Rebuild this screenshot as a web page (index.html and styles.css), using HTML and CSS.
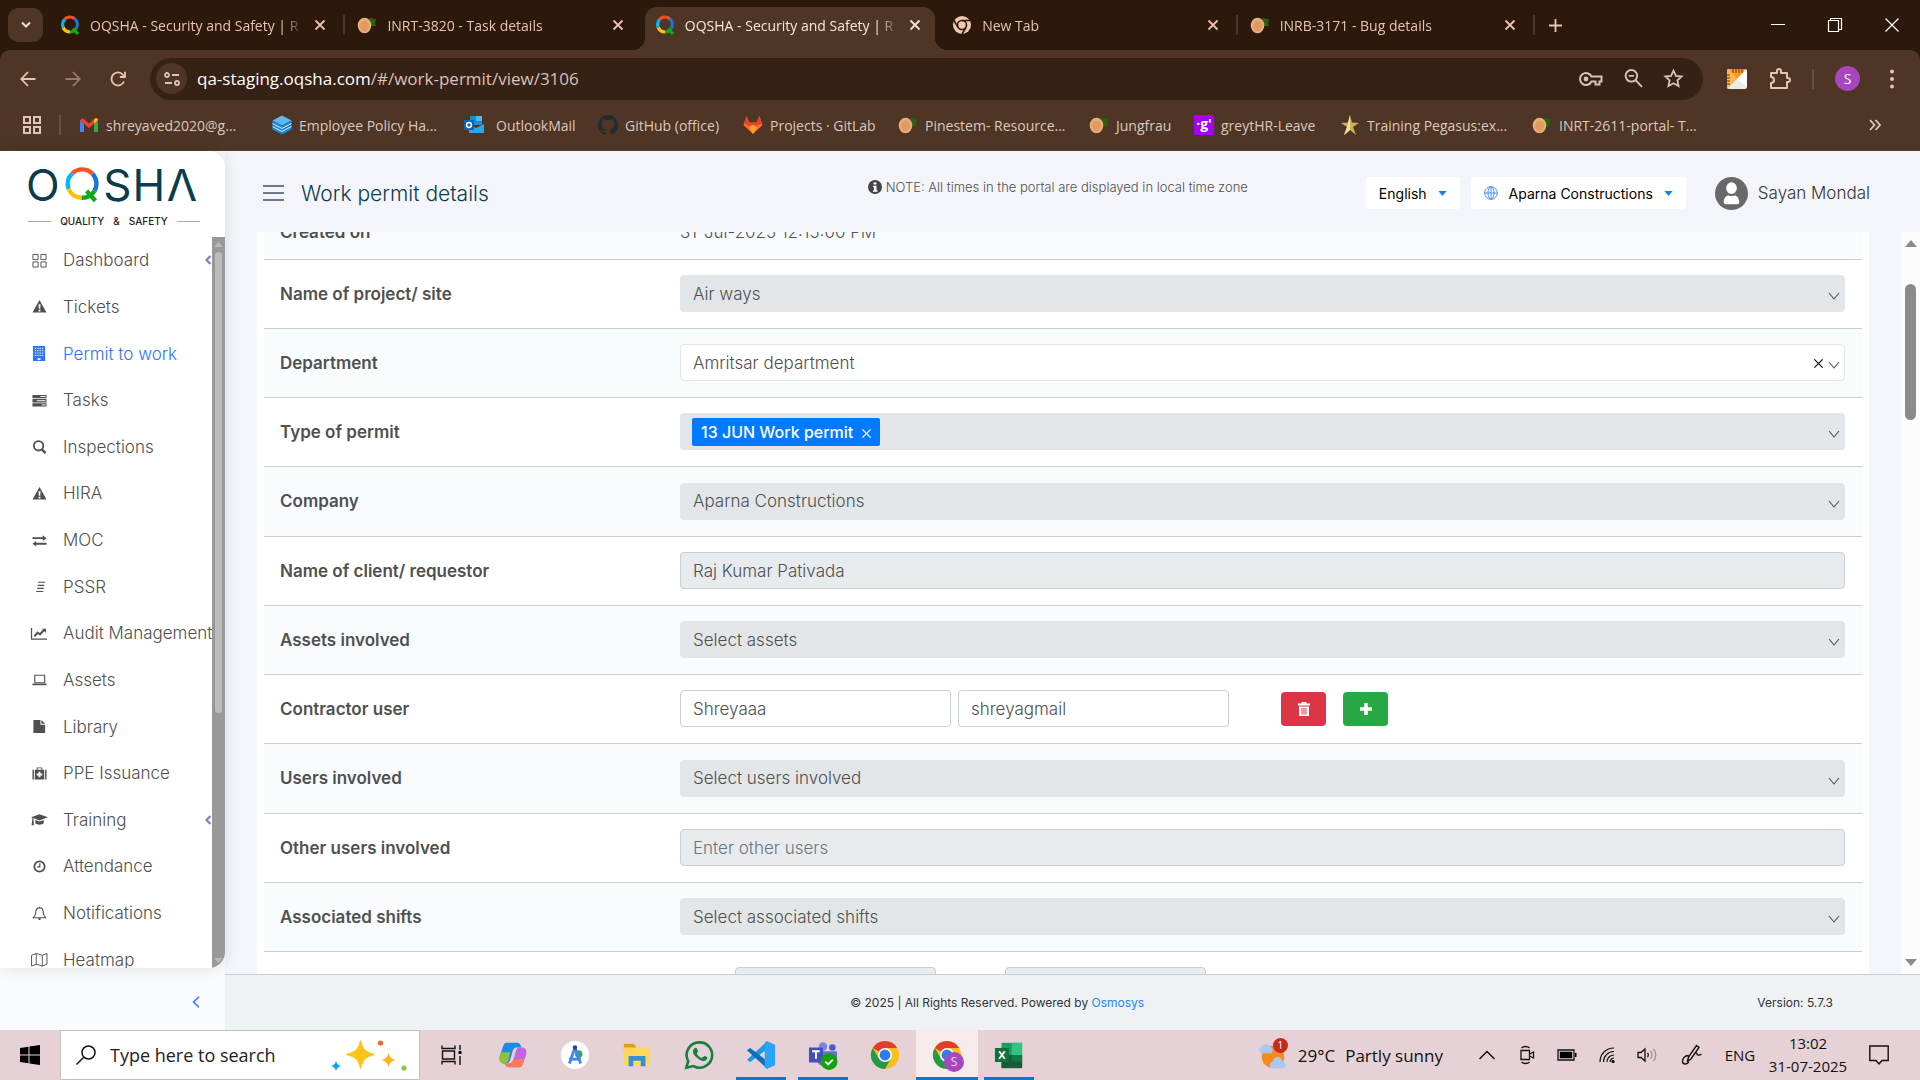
FILE: index.html
```html
<!DOCTYPE html>
<html lang="en">
<head>
  <meta charset="UTF-8" />
  <meta name="viewport" content="width=device-width, initial-scale=1.0"/>
  <title>OQSHA - Security and Safety</title>
  <link rel="stylesheet" href="styles.css">
</head>
<body>
  <!-- shared icons -->
  <svg class="sprite" aria-hidden="true">
    <symbol id="q" viewBox="0 0 20 20">
      <g fill="none" stroke-width="3.2">
        <path d="M4.5 4.5A7.6 7.6 0 0 1 14.5 3.6" stroke="#ff4e1f"/>
        <path d="M14.5 3.6A7.8 7.8 0 0 1 16.3 13.5" stroke="#1976d2"/>
        <path d="M4.5 4.5A7.8 7.8 0 0 0 3.2 12.5" stroke="#00b8f5"/>
        <path d="M3.2 12.5A7.6 7.6 0 0 0 10 17" stroke="#ffc107"/>
        <path d="M10 17A7.4 7.4 0 0 0 16.3 13.5M13 13.5L18 19" stroke="#12a81c"/>
      </g>
    </symbol>
    <symbol id="mango" viewBox="0 0 20 20">
      <path d="M12 3l7 1-1 4 1 3h-5l-2-3z" fill="#2e5f10"/>
      <ellipse cx="7.5" cy="10.5" rx="6.8" ry="7.8" fill="#e3b07a"/>
      <ellipse cx="7.5" cy="11" rx="4.5" ry="5.4" fill="#e39a62"/>
    </symbol>
    <symbol id="close" viewBox="0 0 12 12"><path d="M1.5 1.5l9 9M10.5 1.5l-9 9" stroke="currentColor" stroke-width="1.8" fill="none"/></symbol>
    <symbol id="thin-x" viewBox="0 0 12 12"><path d="M1.5 1.5l9 9M10.5 1.5l-9 9" stroke="currentColor" stroke-width="1.4" fill="none"/></symbol>
    <symbol id="down" viewBox="0 0 12 8"><path d="M1 1l5 6 5-6" stroke="currentColor" stroke-width="1.1" fill="none"/></symbol>
    <symbol id="caret" viewBox="0 0 10 6"><path d="M0 0h10L5 6z" fill="currentColor"/></symbol>
    <symbol id="warn" viewBox="0 0 16 16"><path fill="currentColor" fill-rule="evenodd" d="M8 1l7.5 13.5H.5zM6.9 5.5l.3 5h1.6l.3-5zM7 11.5v1.8h2v-1.8z"/></symbol>
    <symbol id="left" viewBox="0 0 8 10"><path d="M6.5 1L2.5 5l4 4" stroke="currentColor" stroke-width="2.2" fill="none"/></symbol>
    <symbol id="chrome" viewBox="0 0 32 32">
      <circle cx="16" cy="16" r="15" fill="#fbc116"/>
      <path d="M16 16L3 8.5A15 15 0 0 1 29 8.5H16z" fill="#e33b2e"/>
      <path d="M3 8.5A15 15 0 0 0 16 31l6.500-11.500L9.500 19.700z" fill="#249a46"/>
      <circle cx="16" cy="16" r="7.5" fill="#fff"/>
      <circle cx="16" cy="16" r="5.8" fill="#2f7de9"/>
    </symbol>
  </svg>

  <header class="browser">
    <div class="tabstrip">
      <button class="tab-search" aria-label="Search tabs"><svg viewBox="0 0 12 8"><path d="M2 1.5l4 4 4-4" fill="none" stroke="currentColor" stroke-width="2"/></svg></button>
      <div class="tabs">
        <div class="tab divided">
          <svg class="fav"><use href="#q"/></svg><span class="tab-title">OQSHA - Security and Safety | R</span>
          <button class="tab-close" aria-label="Close tab"><svg><use href="#close"/></svg></button>
        </div>
        <div class="tab">
          <svg class="fav"><use href="#mango"/></svg><span class="tab-title">INRT-3820 - Task details</span>
          <button class="tab-close" aria-label="Close tab"><svg><use href="#close"/></svg></button>
        </div>
        <div class="tab active">
          <svg class="fav"><use href="#q"/></svg><span class="tab-title">OQSHA - Security and Safety | R</span>
          <button class="tab-close" aria-label="Close tab"><svg><use href="#close"/></svg></button>
        </div>
        <div class="tab divided">
          <svg class="fav" viewBox="0 0 20 20"><circle cx="10" cy="10" r="9" fill="#f0c8b0"/><circle cx="10" cy="10" r="4.5" fill="none" stroke="#2d190c" stroke-width="1.6"/><path d="M10 5.5h8M6 12.3L2 5.5M14 12.3L10 19" stroke="#2d190c" stroke-width="1.6"/></svg><span class="tab-title">New Tab</span>
          <button class="tab-close" aria-label="Close tab"><svg><use href="#close"/></svg></button>
        </div>
        <div class="tab divided">
          <svg class="fav"><use href="#mango"/></svg><span class="tab-title">INRB-3171 - Bug details</span>
          <button class="tab-close" aria-label="Close tab"><svg><use href="#close"/></svg></button>
        </div>
      </div>
      <button class="new-tab" aria-label="New tab"><svg viewBox="0 0 14 14"><path d="M7 0v14M0 7h14" stroke="currentColor" stroke-width="2"/></svg></button>
      <div class="window-buttons">
        <button aria-label="Minimize"><svg viewBox="0 0 14 14"><path d="M0 6.5h14" stroke="#fff"/></svg></button>
        <button aria-label="Restore"><svg viewBox="0 0 14 14"><path d="M.5 2.5h10v11H.5zM2.5 2.5v-2h11v11h-3" fill="none" stroke="#fff" stroke-width="1.2"/></svg></button>
        <button aria-label="Close"><svg viewBox="0 0 14 14"><path d="M.5.5l13 13M13.5.5l-13 13" stroke="#fff" stroke-width="1.2"/></svg></button>
      </div>
    </div>

    <div class="toolbar">
      <div class="nav-buttons">
        <button aria-label="Back"><svg viewBox="0 0 16 16"><path d="M15.5 8H1.5M8 1L1.3 8 8 15" fill="none" stroke="currentColor" stroke-width="1.8"/></svg></button>
        <button class="dim" aria-label="Forward"><svg viewBox="0 0 16 16"><path d="M.5 8h14M8 1l6.700 7L8 15" fill="none" stroke="currentColor" stroke-width="1.8"/></svg></button>
        <button aria-label="Reload"><svg viewBox="0 0 16 16"><path d="M14 10.5A6.5 6.5 0 1 1 13 3.8L15 6M15 .8V6H9.800" fill="none" stroke="currentColor" stroke-width="1.8"/></svg></button>
      </div>
      <div class="omnibox">
        <span class="site-info"><svg viewBox="0 0 16 16"><g fill="none" stroke="currentColor" stroke-width="1.8"><circle cx="3" cy="4" r="2"/><path d="M8 4h7M1 12h7"/><circle cx="13" cy="12" r="2"/></g></svg></span>
        <span class="url"><b>qa-staging.oqsha.com</b>/#/work-permit/view/3106</span>
        <svg class="key" viewBox="0 0 24 16"><path d="M12.500 5.500H22.500v5h-2v3h-4v-3h-4a6 6 0 1 1 0-5z" fill="none" stroke="currentColor" stroke-width="2"/><circle cx="7" cy="8" r="2.4" fill="currentColor"/></svg>
        <svg viewBox="0 0 18 18"><g fill="none" stroke="currentColor" stroke-width="1.8"><circle cx="7" cy="6.5" r="5.5"/><path d="M11 10.5l6 6.500M4.500 6.500h5"/></g></svg>
        <svg viewBox="0 0 18 18"><path d="M9 1.500l2.300 5 5.400.6-4 3.700 1.100 5.400L9 13.500l-4.800 2.700 1.100-5.400-4-3.700 5.400-.6z" fill="none" stroke="currentColor" stroke-width="1.7"/></svg>
      </div>
      <div class="extensions">
        <svg viewBox="0 0 22 22"><rect x="1" y="1" width="20" height="20" rx="2" fill="#ececec"/><path d="M1 3a2 2 0 0 1 2-2h16L11 11 1 21z" fill="#fcb84f"/><path d="M3 1l8 10L20 1z" fill="#ff9a1e"/><path d="M21 2v17L11 11z" fill="#fff"/><path d="M7 1v4M10 1v4M13 1v4M16 1v4M1 7h3M1 10h3M1 13h3M1 16h3" stroke="#5a3c12"/></svg>
        <svg viewBox="0 0 22 22"><path d="M2 5h6V3a2 2 0 0 1 4 0v2h6v5h1a2 2 0 0 1 0 4h-1v6H2v-5a3 3 0 0 0 0-6z" fill="none" stroke="currentColor" stroke-width="2" stroke-linejoin="round"/></svg>
        <i class="bar-line"></i>
        <span class="profile">S</span>
        <svg class="dots" viewBox="0 0 6 22"><g fill="currentColor"><circle cx="3" cy="3.5" r="2"/><circle cx="3" cy="11" r="2"/><circle cx="3" cy="18.5" r="2"/></g></svg>
      </div>
    </div>

    <nav class="bookmarks">
      <svg class="apps" viewBox="0 0 18 18"><path d="M1 1h6v6H1zM11 1h6v6h-6zM1 11h6v6H1zM11 11h6v6h-6z" fill="none" stroke="currentColor" stroke-width="2"/></svg>
      <i class="bar-line"></i>
      <div class="bookmark-list">
        <a href="#"><svg viewBox="0 0 20 20"><path d="M1 5v12h4V9z" fill="#4285f4"/><path d="M19 5v12h-4V9z" fill="#34a853"/><path d="M1 5.500L3.500 3 10 8.500 16.500 3 19 5.500 10 13z" fill="#ea4335"/><path d="M15 9l4-4V4l-2-1-2 1.500z" fill="#fbbc04"/></svg>shreyaved2020@g...</a>
        <a href="#"><svg viewBox="0 0 20 20"><path d="M10 .5l9.500 5L10 10.500.5 5.500z" fill="#5db8f5"/><path d="M.5 5.500v9l9.500 5 9.500-5v-9l-9.500 5z" fill="#1c86d6"/><path d="M.5 8.500l9.500 5 9.500-5M.5 11.500l9.500 5 9.500-5" stroke="#d8efff" fill="none"/></svg>Employee Policy Ha...</a>
        <a href="#" class="wide-gap"><svg viewBox="0 0 20 20"><path d="M6 1h12v9H6z" fill="#1a8be0"/><path d="M12 1h6v5h-6z" fill="#50b8f0"/><path d="M5 9l7 4 8-4v9H5z" fill="#28a8ea"/><path d="M0 5h10v10H0z" fill="#0a64b8"/><circle cx="5" cy="10" r="2.4" fill="none" stroke="#fff" stroke-width="1.5"/></svg>OutlookMail</a>
        <a href="#"><svg viewBox="0 0 16 16"><path fill="#242a30" d="M8 0C3.580 0 0 3.580 0 8c0 3.540 2.290 6.530 5.470 7.590.4.070.55-.17.55-.38 0-.19-.01-.82-.01-1.490-2.010.37-2.530-.49-2.690-.94-.09-.23-.48-.94-.82-1.130-.28-.15-.68-.52-.01-.53.63-.01 1.080.58 1.230.82.72 1.210 1.870.87 2.330.66.07-.52.28-.87.51-1.070-1.780-.2-3.640-.89-3.640-3.950 0-.87.31-1.590.82-2.150-.08-.2-.36-1.020.08-2.120 0 0 .67-.21 2.200.82.640-.18 1.320-.27 2-.27s1.360.09 2 .27c1.530-1.040 2.200-.82 2.200-.82.440 1.100.160 1.920.080 2.120.510.560.820 1.270.820 2.150 0 3.070-1.870 3.750-3.650 3.950.290.250.540.730.540 1.480 0 1.070-.010 1.930-.010 2.200 0 .210.150.460.550.380A8.010 8.010 0 0 0 16 8c0-4.420-3.580-8-8-8z"/></svg>GitHub (office)</a>
        <a href="#"><svg viewBox="0 0 20 20"><path d="M3.500 1L6.500 7.500h7L16.500 1l3 9L10 19 .5 10z" fill="#fc6d26"/><path d="M3.500 1L6.500 7.500h7L16.500 1l2.500 7.500-5.500 2.500-3.500-1.500-3.500 1.500L1 8.500z" fill="#e24329"/><path d="M6 12l4-2 4 2-4 7z" fill="#fca326"/></svg>Projects · GitLab</a>
        <a href="#"><svg><use href="#mango"/></svg>Pinestem- Resource...</a>
        <a href="#"><svg><use href="#mango"/></svg>Jungfrau</a>
        <a href="#"><i class="grey-logo">·g'</i>greytHR-Leave</a>
        <a href="#"><svg viewBox="0 0 20 20"><path d="M10 0l2 7.500 7 .5-6 4 3 8-6-5-6 5 3-8-6-4 7-.5z" fill="#c9b25a"/><path d="M10 0v15l-6 5 3-8z" fill="#f0e3a0"/></svg>Training Pegasus:ex...</a>
        <a href="#"><svg><use href="#mango"/></svg>INRT-2611-portal- T...</a>
      </div>
      <svg class="more" viewBox="0 0 12 12"><path d="M1 1l4.500 5L1 11M6.500 1L11 6l-4.500 5" fill="none" stroke="currentColor" stroke-width="1.8"/></svg>
    </nav>
  </header>

  <div class="app">
    <div class="side">
      <aside class="sidebar">
        <div class="logo">
          <svg class="wordmark" viewBox="0 0 176 42">
            <text x="-2" y="36">O</text>
            <text x="77" y="36">S</text>
            <text x="107" y="36">H</text>
            <text x="142" y="36">Λ</text>
            <g fill="none" stroke-width="4.5">
              <path d="M45.500 8A14.500 14.500 0 0 1 66 8.500" stroke="#ff4e1f"/>
              <path d="M66 8.500A14.500 14.500 0 0 1 68 26" stroke="#1976d2"/>
              <path d="M45.500 8A14.500 14.500 0 0 0 41.500 24" stroke="#00b8f5"/>
              <path d="M41.500 24A14.500 14.500 0 0 0 55 33" stroke="#ffc107"/>
              <path d="M55 33A14.500 14.500 0 0 0 68 26M60 26l9 10" stroke="#12a81c"/>
            </g>
          </svg>
          <div class="tagline"><span>QUALITY</span><span>&amp;</span><span>SAFETY</span></div>
        </div>
        <div class="menu-wrap">
          <ul class="menu">
            <li><a href="#"><svg viewBox="0 0 16 16"><path d="M1 1.500h5.500V7H1zM9.500 1.500H15V7H9.500zM1 9.500h5.500V15H1zM9.500 9.500H15V15H9.500z" fill="none" stroke="currentColor"/></svg>Dashboard</a><svg class="expand"><use href="#left"/></svg></li>
            <li><a href="#"><svg><use href="#warn"/></svg>Tickets</a></li>
            <li class="current"><a href="#"><svg viewBox="0 0 16 16"><path fill="currentColor" d="M1 0h13v16H1z"/><path d="M3 2.500h9M3 5h9M3 7.500h9M3 10h9" stroke="#fff" stroke-dasharray="1.500 1"/><path d="M6 13h3v2H6z" fill="#fff"/></svg>Permit to work</a></li>
            <li><a href="#"><svg viewBox="0 0 16 16"><path fill="currentColor" d="M.5 2h15v3.500H.5zM.5 6.500h15V10H.5zM.5 11h15v3.500H.5z"/><path d="M9 3.700h5.500M5 8.200h9.500M10.500 12.700h4" stroke="#fff"/></svg>Tasks</a></li>
            <li><a href="#"><svg viewBox="0 0 16 16"><g fill="none" stroke="currentColor" stroke-width="2"><circle cx="7" cy="7.3" r="5"/><path d="M10.500 11l4 4" stroke-width="2.6"/></g></svg>Inspections</a></li>
            <li><a href="#"><svg><use href="#warn"/></svg>HIRA</a></li>
            <li><a href="#"><svg viewBox="0 0 16 16"><path fill="currentColor" d="M.5 4.500h11V2.500l4 3-4 3V6.500H.5zM15.500 12.500h-11v2l-4-3 4-3v2h11z"/></svg>MOC</a></li>
            <li><a href="#"><svg viewBox="0 0 16 16"><path d="M6.500 3.500H14M6 6.800h7M5.500 10h7M4.500 13.300H12" stroke="currentColor" stroke-width="1.2"/></svg>PSSR</a></li>
            <li><a href="#"><svg viewBox="0 0 16 16"><path d="M-.5 2v12H16" stroke="currentColor" fill="none" stroke-width="1.3"/><path d="M2.500 11l3.500-4 2.500 2 4-4.500" stroke="currentColor" fill="none" stroke-width="2.2"/><path d="M10.500 3H15v4.500z" fill="currentColor"/></svg>Audit Management</a></li>
            <li><a href="#"><svg viewBox="0 0 16 16"><path d="M3 3.500h10.500v8H3z" stroke="currentColor" fill="none" stroke-width="1.2"/><path d="M.5 12.300h15v1.800H.5z" fill="currentColor"/></svg>Assets</a></li>
            <li><a href="#"><svg viewBox="0 0 16 16"><path fill="currentColor" d="M1.500 1H9v5h5v9H1.500zM10 1l4 4h-4z"/></svg>Library</a></li>
            <li><a href="#"><svg viewBox="0 0 16 16"><path fill="currentColor" d="M.5 4H2v10.500H.5zM14 4h1.500v10.500H14zM3 4h2V1.500h6V4h2v10.500H3zM6 2.500V4h4V2.500z" fill-rule="evenodd"/><path d="M8 6v6M5 9h6" stroke="#fff" stroke-width="2"/></svg>PPE Issuance</a></li>
            <li><a href="#"><svg viewBox="0 0 16 16"><path fill="currentColor" d="M8 2.500l9 3L8 9-1 5.500zM3.500 8.500L8 10l4.500-1.500V12c-2 2-7 2-9 0zM.5 6.500h1L2 14H-.5z"/></svg>Training</a><svg class="expand"><use href="#left"/></svg></li>
            <li><a href="#"><svg viewBox="0 0 16 16"><g fill="none" stroke="currentColor"><circle cx="8" cy="8" r="5.5" stroke-width="1.9"/><path d="M8.300 4.500v4H5.500" stroke-width="1.3"/></g></svg>Attendance</a></li>
            <li><a href="#"><svg viewBox="0 0 16 16"><path d="M8 2C5 2 4 4.500 4 7c0 3-1 4-2.500 5.500h13C13 11 12 10 12 7c0-2.500-1-5-4-5zM8 .8V2" fill="none" stroke="currentColor" stroke-width="1.2"/><path d="M6.500 13h3c0 2.500-3 2.500-3 0z" fill="currentColor"/></svg>Notifications</a></li>
            <li><a href="#"><svg viewBox="0 0 16 16"><path d="M-.5 3.500L4.500 1.500l6.500 2 5-2v11.500l-5 2-6.500-2-5 2zM4.500 1.500V13M11 3.500V15" fill="none" stroke="currentColor"/></svg>Heatmap</a></li>
          </ul>
          <div class="side-scroll"><svg viewBox="0 0 10 6"><path d="M0 6h10L5 0z" fill="#bbb"/></svg><i></i><svg viewBox="0 0 10 6"><path d="M0 0h10L5 6z" fill="#bbb"/></svg></div>
        </div>
      </aside>
      <button class="collapse" aria-label="Collapse menu"><svg viewBox="0 0 8 12"><path d="M7 .8L1.500 6 7 11.200" fill="none" stroke="currentColor" stroke-width="1.5"/></svg></button>
    </div>

    <main class="main">
      <header class="topbar">
        <button class="burger" aria-label="Menu"><i></i><i></i><i></i></button>
        <h1>Work permit details</h1>
        <p class="note"><svg viewBox="0 0 14 14"><circle cx="7" cy="7" r="7" fill="#444"/><path d="M5.500 2.500h3v2h-3zM5 5.800h3.500v4.400h1v1.500H5v-1.500h1V7.300H5z" fill="#fff"/></svg>NOTE: All times in the portal are displayed in local time zone</p>
        <div class="user-area">
          <button class="drop">English<svg class="caret"><use href="#caret"/></svg></button>
          <button class="drop"><svg class="globe" viewBox="0 0 14 14"><g fill="none" stroke="#4a90e2"><circle cx="7" cy="7" r="6.3"/><ellipse cx="7" cy="7" rx="3" ry="6.3"/><path d="M.7 7h12.600M7 .7v12.600"/></g></svg>Aparna Constructions<svg class="caret"><use href="#caret"/></svg></button>
          <svg class="avatar" viewBox="0 0 34 34"><circle cx="17" cy="17" r="17" fill="#696969"/><ellipse cx="17" cy="11.5" rx="5.5" ry="6" fill="#fff"/><path d="M9 26c0-5 3-7 5-7 2 1 4 1 6 0 2 0 5 2 5 7 0 1-.5 2-2 2H11c-1.500 0-2-1-2-2z" fill="#fff"/></svg>
          <span class="user-name">Sayan Mondal</span>
        </div>
      </header>

      <div class="content">
        <div class="panel">
          <table class="details">
            <tr class="text-row"><th>Created on</th><td>31-Jul-2025 12:15:00 PM</td></tr>
            <tr>
              <th><label for="site">Name of project/ site</label></th>
              <td><div class="select-box"><select id="site" disabled><option>Air ways</option></select><svg><use href="#down"/></svg></div></td>
            </tr>
            <tr>
              <th><label for="department">Department</label></th>
              <td><div class="select-box"><select id="department"><option>Amritsar department</option></select><button class="clear" aria-label="Clear"><svg><use href="#thin-x"/></svg></button><svg><use href="#down"/></svg></div></td>
            </tr>
            <tr>
              <th>Type of permit</th>
              <td><div class="select-box multi"><span class="tag">13 JUN Work permit<svg><use href="#thin-x"/></svg></span><svg><use href="#down"/></svg></div></td>
            </tr>
            <tr>
              <th><label for="company">Company</label></th>
              <td><div class="select-box"><select id="company" disabled><option>Aparna Constructions</option></select><svg><use href="#down"/></svg></div></td>
            </tr>
            <tr>
              <th><label for="client">Name of client/ requestor</label></th>
              <td><input type="text" id="client" value="Raj Kumar Pativada" disabled /></td>
            </tr>
            <tr>
              <th><label for="assets">Assets involved</label></th>
              <td><div class="select-box"><select id="assets" disabled><option>Select assets</option></select><svg><use href="#down"/></svg></div></td>
            </tr>
            <tr>
              <th><label for="contractor">Contractor user</label></th>
              <td>
                <div class="contractor">
                  <input type="text" id="contractor" value="Shreyaaa" />
                  <input type="text" aria-label="Contractor email" value="shreyagmail" />
                  <button class="btn remove" aria-label="Remove"><svg viewBox="0 0 14 16"><path fill="#fff" d="M5 1h4l1 1.500h3V4.500H1V2.500h3zM2 5.500h10V15H2z"/><path d="M5 7v6.500M7 7v6.500M9 7v6.500" stroke="#dc3545"/></svg></button>
                  <button class="btn add" aria-label="Add"><svg viewBox="0 0 14 16"><path d="M7 2v12M1 8h12" stroke="#fff" stroke-width="3.5"/></svg></button>
                </div>
              </td>
            </tr>
            <tr>
              <th><label for="users">Users involved</label></th>
              <td><div class="select-box"><select id="users" disabled><option>Select users involved</option></select><svg><use href="#down"/></svg></div></td>
            </tr>
            <tr>
              <th><label for="others">Other users involved</label></th>
              <td><input type="text" id="others" placeholder="Enter other users" disabled /></td>
            </tr>
            <tr>
              <th><label for="shifts">Associated shifts</label></th>
              <td><div class="select-box"><select id="shifts" disabled><option>Select associated shifts</option></select><svg><use href="#down"/></svg></div></td>
            </tr>
            <tr>
              <th></th>
              <td><div class="period"><input type="text" aria-label="From" disabled /><input type="text" aria-label="To" disabled /></div></td>
            </tr>
          </table>
        </div>
        <div class="page-scroll"><svg viewBox="0 0 12 7"><path d="M0 7h12L6 0z" fill="#8b8b8b"/></svg><i></i><svg viewBox="0 0 12 7"><path d="M0 0h12L6 7z" fill="#8b8b8b"/></svg></div>
      </div>

      <footer class="footer">
        <p>© 2025 | All Rights Reserved. Powered by <a href="#">Osmosys</a></p>
        <span>Version: 5.7.3</span>
      </footer>
    </main>
  </div>

  <div class="taskbar">
    <button class="start" aria-label="Start"><svg viewBox="0 0 20 20"><path d="M0 3l8.500-1.200v7.700H0zM9.500 1.600L20 0v9.500H9.500zM0 10.500h8.500v7.700L0 17zM9.500 10.500H20V20l-10.500-1.600z"/></svg></button>
    <div class="search">
      <svg class="lens" viewBox="0 0 20 20"><g fill="none" stroke="#111" stroke-width="1.5"><circle cx="12.5" cy="7.5" r="6.5"/><path d="M8 12l-7.500 7.500"/></g></svg>
      <input type="text" aria-label="Search" placeholder="Type here to search" />
      <svg class="sparkles" viewBox="0 0 76 32"><path d="M29.500 1.500c2.500 9 4 11 14 14-10 3-11.500 5-14 14-2.500-9-4-11-14-14 10-3 11.500-5 14-14z" fill="#fcc419" stroke="#fcc419" stroke-linejoin="round"/><path d="M57.500 14c1.300 4.500 2.500 5.500 7 7-4.500 1.500-5.700 2.500-7 7-1.300-4.500-2.500-5.500-7-7 4.500-1.500 5.700-2.500 7-7z" fill="#fcb415"/><path d="M5 22c1 3 2 4 5 5-3 1-4 2-5 5-1-3-2-4-5-5 3-1 4-2 5-5z" fill="#0aa2ed"/><circle cx="49.5" cy="4" r="2.6" fill="#f1642b"/><circle cx="73" cy="29" r="2.6" fill="#8bc34a"/></svg>
    </div>
    <div class="pins">
      <button aria-label="Task view"><svg class="small" viewBox="0 0 20 20"><path d="M1 .5v3h13v-3M1 19.500v-3h13v3M1.500 6h12v8h-12zM19 0v5M19 11v9" fill="none" stroke="#111" stroke-width="1.4"/><path d="M17.500 6h3v3h-3z"/></svg></button>
      <button aria-label="Copilot"><svg viewBox="0 0 32 32"><path d="M9 3h11c3 0 4 2 5 5h-5c-3 0-4 2-5 6l-2 7c-1 3-2 4-5 4H6c-4 0-5-4-4-8l3-9c1-3 2-5 4-5z" fill="#1b8de0"/><path d="M3 13h10l-2 9c-1 2-2 3-5 3-4 0-5-4-4-8z" fill="#8ac43c"/><path d="M23 29H12c-3 0-4-2-5-4h5c3 0 4-2 5-6l2-7c1-3 2-4 5-4h2c4 0 5 4 4 8l-3 8c-1 3-2 5-4 5z" fill="#c462e0"/><path d="M16 21l12-1c-1 5-2 9-5 9H12c-3 0-4-2-5-4h5c2 0 3-1 4-4z" fill="#fb7a56"/></svg></button>
      <button aria-label="Android Studio"><svg viewBox="0 0 32 32"><circle cx="16" cy="16" r="15" fill="#fff"/><circle cx="20" cy="15" r="4" fill="#34a853"/><path d="M16 8L10 25M16 8l6 17M10 19c3 2 9 2 12 0" fill="none" stroke="#4285f4" stroke-width="3"/><circle cx="16" cy="8" r="2.4" fill="#2d4a68"/></svg></button>
      <button aria-label="File Explorer"><svg viewBox="0 0 32 32"><path d="M2 4h10l3 3v5H2z" fill="#e0a000"/><path d="M2 8h28v19H2z" fill="#ffd75e"/><path d="M7 17h18v11h-5v-6h-8v6H7z" fill="#3a8fd0"/></svg></button>
      <button aria-label="WhatsApp"><svg viewBox="0 0 32 32"><path d="M16.500 2.500a13.500 13.500 0 1 1-6.500 25.300L2.500 29.500l2-7A13.500 13.500 0 0 1 16.500 2.500z" fill="none" stroke="#15803f" stroke-width="2.8"/><path d="M11 9c2-2 3 0 4 3 0 1-2 2-1 3 1 2 3 4 5 4 1 0 2-2 3-2 3 1 4 2 2 4-3 3-7 1-10-2-4-3-6-7-3-10z" fill="#15803f"/></svg></button>
      <button class="open" aria-label="Visual Studio Code"><svg viewBox="0 0 32 32"><path d="M22 2v8L4.500 23.500 1 21z" fill="#2098e0"/><path d="M22 30v-8L4.500 8.500 1 11z" fill="#0a70b8"/><path d="M22 1l9 4v22l-9 4-2-2V3z" fill="#2aa4f4"/></svg></button>
      <button class="open" aria-label="Teams"><svg viewBox="0 0 32 32"><circle cx="16" cy="7" r="4.5" fill="#7b83eb"/><circle cx="26" cy="8" r="3.5" fill="#5059c9"/><path d="M10 12h14v12c-4 6-14 4-14-2zM24 12h7v9c-2 3-7 3-7 0z" fill="#6870d8"/><path d="M1 8h15v16H1z" fill="#4650b4"/><path d="M4.500 12h8M8.500 12v8" stroke="#fff" stroke-width="2"/><circle cx="22.5" cy="23" r="9" fill="#13a10e"/><path d="M18.500 23l3 3 5-5" fill="none" stroke="#fff" stroke-width="2"/></svg></button>
      <button aria-label="Chrome"><svg><use href="#chrome"/></svg></button>
      <button class="open focused" aria-label="Chrome window"><svg><use href="#chrome"/></svg><span class="mini">S</span></button>
      <button class="open" aria-label="Excel"><svg viewBox="0 0 32 32"><path d="M8 3h22v27H8z" fill="#1f9b60"/><path d="M19 3h11v13H19z" fill="#33c481"/><path d="M8 16h22v14H8z" fill="#185c37"/><path d="M19 16h11v7H19z" fill="#107c41"/><path d="M1 8.500h15v15H1z" fill="#10713c"/><path d="M5.500 12l6 8M11.500 12l-6 8" stroke="#fff" stroke-width="2"/></svg></button>
    </div>
    <div class="weather">
      <span class="weather-icon"><svg viewBox="0 0 32 32"><circle cx="16" cy="18" r="12" fill="#f58a1f"/><path d="M3 14a4 4 0 0 1 1-7 5 5 0 0 1 9 0 4 4 0 0 1 1 7zM14 30a4 4 0 0 1 2-7 5 5 0 0 1 10 0 4 4 0 0 1 2 7z" fill="#a9c8f5"/></svg><b>1</b></span>
      <span>29°C</span><span>Partly sunny</span>
    </div>
    <div class="tray">
      <svg viewBox="0 0 20 20"><path d="M2.500 14L10 6.500l7.500 7.500" fill="none" stroke="#111" stroke-width="1.5"/></svg>
      <svg viewBox="0 0 20 20"><path d="M4 5.500h8.500v9H4zM12.500 9l4-2v6l-4-2M4.500 3c2-2 6-2 8 0M4.500 17c2 2 6 2 8 0" fill="none" stroke="#111" stroke-width="1.3"/></svg>
      <svg viewBox="0 0 20 20"><path d="M1 5h16v10H1z" fill="none" stroke="#111" stroke-width="1.3"/><path d="M2.800 6.800h12.400v6.400H2.800zM18 8h1.500v4H18z"/></svg>
      <svg viewBox="0 0 20 20"><path d="M3 17C3 9 9 3 17 3M6.500 17C6.500 11 11 6.500 17 6.500M10 17c0-4 3-7 7-7M13 17c0-2 2-4 4-4" fill="none" stroke="#111" stroke-width="1.2"/><circle cx="16" cy="16.5" r="1.6"/></svg>
      <svg viewBox="0 0 20 20"><path d="M1 7.500h3L8 4v12l-4-3.500H1z" fill="none" stroke="#111" stroke-width="1.3"/><path d="M10.500 8c1 1 1 3 0 4" fill="none" stroke="#111" stroke-width="1.3"/><path d="M13.500 6c2 2 2 6 0 8M16.500 4c3 3 3 9 0 12" fill="none" stroke="#a08f93" stroke-width="1.3"/></svg>
      <svg class="pen" viewBox="0 0 20 20"><path d="M14.500.5l2.500 2L9 14l-3.500 2 1-4zM6.500 10.500c-4 0-6 3-6 6s5 3.500 6.500 0M12 9c2-2 3-1 3 0s2 2 4.500 0" fill="none" stroke="#111" stroke-width="1.4"/></svg>
      <span class="lang">ENG</span>
      <span class="clock">13:02<br>31-07-2025</span>
      <svg class="notices" viewBox="0 0 20 20"><path d="M.8 1h18.400v14.500H13L10 19l-3-3.500H.8z" fill="none" stroke="#111" stroke-width="1.4"/></svg>
    </div>
  </div>
</body>
</html>
```
FILE: styles.css
```css
* { box-sizing: border-box; }

body {
  margin: 0;
  height: 100vh;
  display: flex;
  flex-direction: column;
  overflow: hidden;
  font-family: Inter, sans-serif;
  font-size: 17px;
  color: #505050;
}

button {
  font: inherit;
  color: inherit;
  background: none;
  border: none;
  padding: 0;
  display: flex;
  align-items: center;
  justify-content: center;
}

a { color: inherit; text-decoration: none; }
svg { flex: none; overflow: visible; }
.sprite { position: absolute; width: 0; height: 0; }

/* browser */
.browser {
  flex: none;
  background: #2d190c;
  color: #e8c3ad;
  font-family: "Open Sans", sans-serif;
  font-size: 14px;
  border-bottom: 1px solid #52403a;
}

.tabstrip {
  display: flex;
  align-items: center;
  height: 50px;
  padding-left: 8px;
}

.tab-search {
  width: 35px;
  height: 34px;
  border-radius: 10px;
  background: #4f3526;
  color: #f5ded0;
}
.tab-search svg { width: 12px; height: 8px; }

.tabs {
  flex: 0 1 1487px;
  display: flex;
  align-self: stretch;
  margin-left: 7px;
}

.tab {
  position: relative;
  flex: 1;
  display: flex;
  align-items: center;
  gap: 10px;
  min-width: 0;
  margin-right: 7px;
  padding: 0 14px 0 10px;
}
.fav { width: 20px; height: 20px; }
.tab-title {
  flex: 1;
  overflow: hidden;
  white-space: nowrap;
  mask-image: linear-gradient(90deg, #000 90%, transparent);
}
.tab-close svg { width: 12px; height: 12px; }

.divided::after {
  content: "";
  position: absolute;
  right: -5px;
  width: 2px;
  height: 20px;
  background: #4f3526;
}

.tab.active {
  margin-top: 7px;
  padding-bottom: 7px;
  background: #4f3526;
  color: #f8e6dc;
  border-radius: 12px 12px 0 0;
}
.tab.active::before,
.tab.active::after {
  content: "";
  position: absolute;
  bottom: 0;
  width: 12px;
  height: 12px;
}
.tab.active::before { left: -12px; background: radial-gradient(circle at 0 0, transparent 12px, #4f3526 12px); }
.tab.active::after { right: -12px; background: radial-gradient(circle at 100% 0, transparent 12px, #4f3526 12px); }

.new-tab { width: 36px; height: 30px; }
.new-tab svg { width: 13px; height: 13px; }

.window-buttons { display: flex; margin-left: auto; align-self: stretch; }
.window-buttons button { width: 57px; }
.window-buttons svg { width: 14px; height: 14px; }

.toolbar {
  display: flex;
  align-items: center;
  height: 50px;
  padding-top: 7px;
  background: #4f3526;
  border-radius: 10px 10px 0 0;
}
.nav-buttons { display: flex; padding: 0 10px 0 5px; }
.nav-buttons button { width: 45px; }
.nav-buttons svg { width: 16px; height: 16px; }
.nav-buttons .dim { color: #96796a; }

.omnibox {
  flex: 1;
  display: flex;
  align-items: center;
  gap: 21px;
  height: 42px;
  padding: 0 20px 0 6px;
  border-radius: 21px;
  background: #362115;
  color: #d9c2b6;
}
.omnibox svg { width: 19px; height: 19px; }
.omnibox .key { width: 24px; height: 16px; }
.omnibox .site-info svg { width: 16px; height: 16px; }
.site-info {
  display: grid;
  place-items: center;
  width: 31px;
  height: 31px;
  border-radius: 50%;
  background: #4f3526;
}
.url { flex: 1; margin-left: -11px; font-size: 17px; }
.url b { font-weight: 400; color: #fff; }

.extensions {
  display: flex;
  align-items: center;
  gap: 21px;
  padding: 0 25px 0 23px;
}
.extensions svg { width: 22px; height: 22px; }
.extensions .dots { width: 6px; margin-left: 8px; }
.bar-line { width: 2px; height: 20px; background: #6a4d3d; }
.profile {
  width: 25px;
  height: 25px;
  border-radius: 50%;
  background: #a746bd;
  color: #fff;
  line-height: 25px;
  text-align: center;
}

.bookmarks {
  display: flex;
  align-items: center;
  height: 50px;
  padding: 0 39px 0 23px;
  background: #4f3526;
  color: #dcc8bd;
}
.apps { width: 18px; height: 18px; margin-right: 18px; }
.bookmark-list {
  flex: 1;
  display: grid;
  grid-template-columns: 193px 192px 134px 145px 155px 191px 105px 146px 192px auto;
  margin-left: 18px;
}
.bookmark-list a {
  display: flex;
  align-items: center;
  gap: 7px;
  white-space: nowrap;
}
.bookmark-list .wide-gap { gap: 12px; }
.bookmark-list svg { width: 20px; height: 20px; }
.grey-logo {
  width: 20px;
  height: 20px;
  background: #a600f0;
  color: #fff;
  font: bold 14px/18px "Open Sans", sans-serif;
  text-align: center;
}
.more { width: 12px; height: 12px; }

/* app */
.app { flex: 1; display: flex; min-height: 0; background: #f4f5fa; }

.side {
  width: 225px;
  display: flex;
  flex-direction: column;
  background: #fafbff;
}
.sidebar {
  flex: 1;
  display: flex;
  flex-direction: column;
  min-height: 0;
  overflow: hidden;
  background: #fff;
  border-radius: 0 16px 16px 0;
  box-shadow: 0 0 16px rgba(0, 0, 0, 0.12);
}
.logo { flex: none; height: 86px; padding: 14px 25px 0 28px; }
.wordmark { display: block; width: 172px; height: 42px; }
.wordmark text { font-size: 45px; fill: #0b3c4d; }
.tagline {
  display: flex;
  align-items: center;
  gap: 9px;
  margin-top: 8px;
  font-size: 10px;
  line-height: 12px;
  font-weight: 500;
  color: #222;
}
.tagline::before,
.tagline::after { content: ""; flex: 1; height: 1px; background: #aaa; }

.menu-wrap { flex: 1; display: flex; min-height: 0; }
.menu {
  flex: 1;
  display: grid;
  grid-auto-rows: 1fr;
  height: calc(100% + 15px);
  min-width: 0;
  overflow: hidden;
  margin: 0;
  padding: 0;
  list-style: none;
}
.menu li {
  display: flex;
  align-items: center;
  min-width: 0;
  overflow: hidden;
}
.menu a {
  flex: 1;
  display: flex;
  align-items: center;
  gap: 16px;
  padding-left: 32px;
  white-space: nowrap;
  font-weight: 300;
}
.menu a svg { width: 15px; height: 15px; }
.menu .expand { width: 8px; height: 10px; color: #7b86b0; }
.menu .current { color: #2f74f5; }

.side-scroll {
  width: 13px;
  display: flex;
  flex-direction: column;
  align-items: center;
  padding: 5px 0;
  background: #999;
}
.side-scroll svg { width: 9px; height: 5px; }
.side-scroll i { width: 7px; height: 64%; margin: 5px 0 auto; border-radius: 4px; background: #bbb; }

.collapse {
  flex: none;
  height: 62px;
  padding: 6px 25px 0 0;
  justify-content: flex-end;
  color: #2f74f5;
}
.collapse svg { width: 8px; height: 12px; }

.main { flex: 1; display: flex; flex-direction: column; min-width: 0; }

.topbar {
  flex: none;
  display: flex;
  align-items: center;
  height: 81px;
  padding: 3px 50px 0 38px;
}
.burger { flex-direction: column; gap: 5px; width: 21px; }
.burger i { width: 21px; height: 2px; background: #6c7a89; }
h1 {
  margin: 0 0 0 17px;
  font-size: 21px;
  font-weight: 300;
  color: #0b3c4d;
}
.note {
  display: flex;
  align-items: center;
  gap: 4px;
  margin: 0 118px 0 auto;
  padding-bottom: 12px;
  font-size: 13px;
  font-weight: 300;
}
.note svg { width: 14px; height: 14px; }

.user-area { display: flex; align-items: center; color: #333; }
.drop {
  height: 32px;
  margin-right: 11px;
  padding: 0 13px;
  gap: 11px;
  border-radius: 3px;
  background: #fff;
  color: #000;
  font-size: 14px;
}
.globe { width: 14px; height: 14px; }
.caret { width: 9px; height: 5px; color: #1a7fe0; }
.avatar { width: 33px; height: 33px; margin-left: 18px; }
.user-name { margin-left: 10px; font-size: 17px; font-weight: 300; }

.content { flex: 1; display: flex; min-height: 0; }
.panel {
  flex: 1;
  margin: 0 32px;
  padding: 0 7px;
  overflow: hidden;
  background: #fff;
}
/* scrolled down by part of the first row */
.details {
  width: 100%;
  margin-top: -27px;
  border-collapse: collapse;
  table-layout: fixed;
}
.details th,
.details td {
  height: 69px;
  padding: 0 17px 0 16px;
  border-bottom: 1px solid #c8ced3;
  text-align: left;
}
.details th { width: 416px; font-weight: 600; }
.details td { padding-left: 0; font-weight: 300; }
.details tr:nth-child(4n+1) td { height: 70px; }
.details .text-row th,
.details tr.text-row td { height: 54px; }
.details tr:nth-child(odd) { background: #f8fcff; }

.details input,
.details select,
.multi {
  display: block;
  width: 100%;
  height: 37px;
  padding: 0 12px;
  border: 1px solid #c8ced6;
  border-radius: 4px;
  background: #fff;
  color: #505050;
  font: 300 17px Inter, sans-serif;
  opacity: 1;
  appearance: none;
}
.details input:disabled { background: #e8ebee; }
.details input::placeholder { color: #6c757d; }
.details select { border-color: #e2e6e9; }
.details select:disabled { background: #e2e6e9; }

.select-box { position: relative; }
.select-box > svg {
  position: absolute;
  right: 5px;
  top: 17px;
  width: 12px;
  height: 8px;
}
.clear {
  position: absolute;
  right: 21px;
  top: 14px;
  color: #111;
}
.clear svg { width: 11px; height: 11px; }

.details .multi {
  display: flex;
  align-items: center;
  border: none;
  background: #e2e6e9;
}
.tag {
  display: flex;
  align-items: center;
  gap: 8px;
  height: 28px;
  padding: 0 8px 0 9px;
  border-radius: 2px;
  background: #007bff;
  color: #fff;
  font-size: 16px;
  font-weight: 500;
}
.tag svg { width: 11px; height: 11px; margin-top: 3px; }

.contractor { display: flex; align-items: center; }
.contractor input { width: 271px; margin-right: 7px; }
.btn { width: 45px; height: 34px; border-radius: 4px; }
.btn svg { width: 14px; height: 16px; }
.remove { margin: 0 17px 0 45px; background: #dc3545; }
.add { background: #28a745; }

.period { display: flex; gap: 69px; padding-left: 55px; }
.details .period input { width: 201px; }

.page-scroll {
  width: 19px;
  display: flex;
  flex-direction: column;
  align-items: center;
  padding: 8px 0;
  background: #fcfcfc;
}
.page-scroll svg { width: 12px; height: 7px; }
.page-scroll i { width: 11px; height: 136px; margin: 37px 0 auto; border-radius: 6px; background: #8b8b8b; }

.footer {
  flex: none;
  display: flex;
  align-items: center;
  height: 56px;
  padding-right: 87px;
  border-top: 1px solid #c8ced3;
  background: #eef2f5;
  color: #333;
  font-size: 12px;
}
.footer p { flex: 1; margin: 0; padding-left: 12px; text-align: center; }
.footer a { color: #2684ff; }

/* taskbar */
.taskbar {
  flex: none;
  display: flex;
  align-items: center;
  height: 50px;
  background: #e6d2d6;
  color: #111;
  font-family: "Open Sans", sans-serif;
  font-size: 17px;
}
.start { width: 60px; }
.start svg { width: 20px; height: 20px; }
.search {
  display: flex;
  align-items: center;
  width: 360px;
  height: 50px;
  padding: 0 12px 0 15px;
  border: 1px solid #c4c0c1;
  background: #fff;
}
.lens { width: 20px; height: 20px; }
.search input {
  flex: 1;
  min-width: 0;
  margin-left: 14px;
  padding: 0;
  border: none;
  font: 18px "Open Sans", sans-serif;
}
.search input::placeholder { color: #222; opacity: 1; }
.sparkles { width: 76px; height: 32px; }

.pins { display: flex; align-self: stretch; }
.pins button { position: relative; width: 62px; }
.pins svg { width: 30px; height: 30px; }
.pins .small { width: 20px; height: 20px; }
.pins .open::after {
  content: "";
  position: absolute;
  left: 6px;
  right: 6px;
  bottom: 0;
  height: 3px;
  background: #0078d7;
}
.pins .focused { background: #f6ecee; }
.pins .focused::after { left: 0; right: 0; }
.mini {
  position: absolute;
  right: 14px;
  bottom: 8px;
  width: 20px;
  height: 20px;
  border-radius: 50%;
  background: #a746bd;
  color: #f0d8f5;
  font-size: 12px;
  line-height: 20px;
  text-align: center;
}

.weather { display: flex; align-items: center; gap: 10px; margin-left: auto; white-space: nowrap; }
.weather-icon { position: relative; display: flex; }
.weather-icon svg { width: 30px; height: 30px; }
.weather-icon b {
  position: absolute;
  top: -2px;
  right: 0;
  width: 15px;
  height: 15px;
  border-radius: 50%;
  background: #c42b1c;
  color: #fff;
  font-size: 10px;
  font-weight: 400;
  line-height: 15px;
  text-align: center;
}

.tray { display: flex; align-items: center; margin-left: 24px; padding-right: 31px; font-size: 15px; }
.tray svg { width: 20px; height: 20px; margin: 0 10px; }
.tray .pen { margin: 0 15px; }
.lang { width: 46px; text-align: center; }
.clock { width: 90px; text-align: center; line-height: 23px; }
.tray .notices { margin: 0 0 0 16px; }
```
